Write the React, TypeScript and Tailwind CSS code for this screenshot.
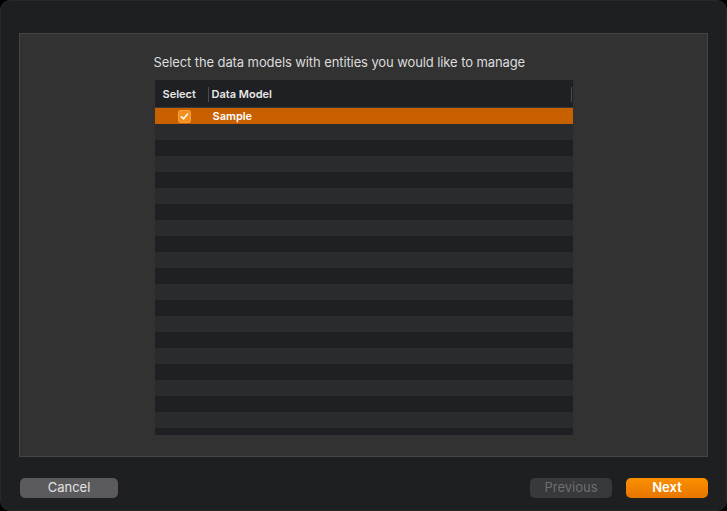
const rows = Array.from({ length: 21 }, (_, i) => i);

const Check = () => (
  <span className="w-[13px] h-[13px] rounded-[3px] bg-[#f5901e] flex items-center justify-center shadow-[inset_0_0_0_0.5px_rgba(255,255,255,0.25)]">
    <svg width="9" height="9" viewBox="0 0 10 10" fill="none">
      <path d="M1.6 5.3 L4 7.6 L8.4 2.2" stroke="white" strokeWidth="1.7" strokeLinecap="round" strokeLinejoin="round" />
    </svg>
  </span>
);

const App = () => {
  return (
    <div className="w-[727px] h-[511px] bg-black" style={{ fontFamily: "Inter, 'Noto Sans', sans-serif" }}>
      <div className="w-full h-full bg-[#1e1f21] rounded-[10px] border border-[#28292b] flex flex-col px-[18px] pt-[32px]">
        <div className="h-[424px] bg-[#323232] border border-[#454545] flex flex-col items-center">
          <div className="w-[418px] flex flex-col">
            <p className="mt-[20px] -ml-px text-[13px] leading-[16px] text-[#dcdcdc] tracking-[-0.1px]">
              Select the data models with entities you would like to manage
            </p>
            <div className="mt-[10px] h-[355px] overflow-hidden flex flex-col">
              <div className="h-[27px] pt-px bg-[#1f2023] flex items-center text-[11px] font-semibold text-[#e8e8e8] shrink-0">
                <span className="w-[53px] pl-[8px]">Select</span>
                <span className="w-px h-[15px] bg-[#4a4b4d]" />
                <span className="flex-1 pl-[3px]">Data Model</span>
                <span className="w-px h-[15px] bg-[#4a4b4d] mr-px" />
              </div>
              <div className="h-px bg-[#3a3b3d] shrink-0" />
              {rows.map((i) =>
                i === 0 ? (
                  <div key={i} className="h-[16px] shrink-0 bg-[#c86000] flex items-center text-[11px] font-semibold text-white">
                    <span className="w-[57px] flex justify-center pl-[2px]">
                      <Check />
                    </span>
                    <span className="pl-px">Sample</span>
                  </div>
                ) : (
                  <div key={i} className={i % 2 === 1 ? "h-[16px] shrink-0 bg-[#2a2b2d]" : "h-[16px] shrink-0 bg-[#1f2023]"} />
                )
              )}
            </div>
          </div>
        </div>
        <div className="mt-[21px] flex items-center text-[13px]">
          <button className="w-[98px] h-[20px] ml-px rounded-[5px] bg-[#5b5b5d] text-[#e2e2e2]">Cancel</button>
          <div className="flex-1" />
          <button className="w-[82px] h-[20px] rounded-[5px] bg-[#38393b] text-[#6e6e70]">Previous</button>
          <button className="w-[82px] h-[20px] ml-[14px] rounded-[5px] bg-gradient-to-b from-[#fb8f00] to-[#e87600] text-white font-semibold">Next</button>
        </div>
      </div>
    </div>
  );
};

export default App;
